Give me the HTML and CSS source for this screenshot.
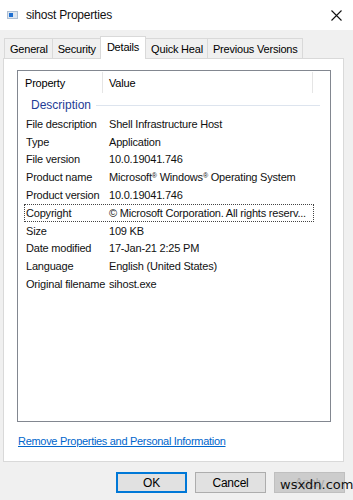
FILE: index.html
```html
<!DOCTYPE html>
<html>
<head>
<meta charset="utf-8">
<link rel="stylesheet" href="styles.css">
</head>
<body>
<div class="window">
  <div class="titlebar">
    <svg class="appicon" width="11" height="8" viewBox="0 0 11 8">
      <rect x="0" y="0" width="11" height="8" fill="#aebfd3"/>
      <rect x="1" y="1" width="9" height="6" fill="#dde6f0"/>
      <rect x="2" y="2" width="4" height="4" fill="#1f6fd1"/>
    </svg>
    <span class="title">sihost Properties</span>
    <svg class="close" width="11" height="11" viewBox="0 0 11 11">
      <path d="M0.5 0.5 L10.5 10.5 M10.5 0.5 L0.5 10.5" stroke="#111" stroke-width="1.1"/>
    </svg>
  </div>
  <div class="tabs">
    <div class="tab">General</div>
    <div class="tab">Security</div>
    <div class="tab active">Details</div>
    <div class="tab">Quick Heal</div>
    <div class="tab last">Previous Versions</div>
  </div>
  <div class="panel">
    <div class="list">
      <div class="header">
        <div class="hcell hprop">Property</div>
        <div class="hcell hval">Value</div>
        <div class="hcell hrest"></div>
      </div>
      <div class="group"><span class="gtext">Description</span><span class="gline"></span></div>
      <div class="row"><span class="k">File description</span><span class="v">Shell Infrastructure Host</span></div>
      <div class="row"><span class="k">Type</span><span class="v">Application</span></div>
      <div class="row"><span class="k">File version</span><span class="v">10.0.19041.746</span></div>
      <div class="row"><span class="k">Product name</span><span class="v">Microsoft<sup>®</sup> Windows<sup>®</sup> Operating System</span></div>
      <div class="row"><span class="k">Product version</span><span class="v">10.0.19041.746</span></div>
      <div class="row focus"><span class="k">Copyright</span><span class="v">© Microsoft Corporation. All rights reserv...</span></div>
      <div class="row"><span class="k">Size</span><span class="v">109 KB</span></div>
      <div class="row"><span class="k">Date modified</span><span class="v">17-Jan-21 2:25 PM</span></div>
      <div class="row"><span class="k">Language</span><span class="v">English (United States)</span></div>
      <div class="row"><span class="k">Original filename</span><span class="v">sihost.exe</span></div>
    </div>
    <a class="link" href="#">Remove Properties and Personal Information</a>
  </div>
  <div class="buttons">
    <div class="btn default">OK</div>
    <div class="btn">Cancel</div>
    <div class="btn disabled">Apply</div>
  </div>
  <div class="watermark">wsxdn.com</div>
</div>
</body>
</html>
```
FILE: styles.css
```css
* { box-sizing: border-box; }
html, body {
  margin: 0;
  padding: 0;
  width: 353px;
  height: 500px;
  overflow: hidden;
}
body {
  background: #f0f0f0;
  font-family: "Liberation Sans", Arial, sans-serif;
  font-size: 11px;
  letter-spacing: -0.2px;
  color: #000;
}
.window {
  position: relative;
  height: 500px;
}
.titlebar {
  height: 30px;
  background: #fff;
  display: flex;
  align-items: center;
  padding-left: 7px;
  padding-right: 11px;
}
.appicon { margin-right: 8px; }
.title {
  font-size: 12px;
  flex: 1;
  color: #111;
}
.tabs {
  display: flex;
  padding-left: 4px;
  margin-top: 8px;
  height: 20px;
  position: relative;
  z-index: 1;
}
.tab {
  height: 20px;
  border: 1px solid #d9d9d9;
  border-bottom: none;
  border-right: none;
  padding: 0 4px 0 5px;
  display: flex;
  align-items: center;
  background: #f0f0f0;
  color: #000;
}
.tab.last { border-right: 1px solid #d9d9d9; }
.tab.active {
  background: #fff;
  height: 23px;
  margin-top: -2px;
  margin-bottom: -1px;
  border-right: 1px solid #d9d9d9;
  padding: 0 6px 3px 6px;
}
.tab.active + .tab { border-left: none; }
.panel {
  margin: 0 9px 0 3px;
  height: 404px;
  background: #fff;
  border: 1px solid #d9d9d9;
  padding: 11px 12px 0 13px;
}
.list {
  height: 352px;
  border: 1px solid #828790;
  background: #fff;
}
.header {
  display: flex;
  height: 24px;
}
.hcell {
  display: flex;
  align-items: center;
  padding-left: 7px;
  border-right: 1px solid #e5e5e5;
  margin: 1px 0 2px;
}
.hprop { width: 85px; }
.hval { width: 210px; padding-left: 6px; }
.hrest { border-right: none; flex: 1; }
.group {
  display: flex;
  align-items: center;
  height: 20px;
  padding-left: 13px;
}
.gtext {
  color: #1e3c96;
  font-size: 12px;
  letter-spacing: 0;
  margin-right: 5px;
}
.gline {
  flex: 1;
  height: 1px;
  background: #dde4ee;
  margin-right: 10px;
}
.row {
  display: flex;
  align-items: center;
  height: 17.8px;
  margin-left: 6px;
  margin-right: 16px;
  padding-left: 1px;
  border: 1px dotted transparent;
}
.row.focus { border-color: #444; }
.k {
  width: 83px;
  flex-shrink: 0;
  white-space: nowrap;
  color: #111;
}
.v { white-space: nowrap; color: #111; }
.v sup {
  font-size: 7px;
  vertical-align: 3px;
  line-height: 0;
}
.link {
  display: block;
  margin-top: 13px;
  margin-left: 1px;
  color: #0066cc;
  text-decoration: underline;
  font-size: 11px;
  letter-spacing: -0.3px;
}
.buttons {
  display: flex;
  justify-content: flex-end;
  gap: 8px;
  padding-right: 8px;
  margin-top: 10px;
}
.btn {
  width: 71px;
  height: 21px;
  border: 1px solid #adadad;
  background: #e1e1e1;
  display: flex;
  align-items: center;
  justify-content: center;
  font-size: 12px;
}
.btn.default { border: 2px solid #0078d7; }
.btn.disabled {
  color: #a8a8a8;
  background: #cccccc;
  border-color: #bfbfbf;
}
.watermark {
  position: absolute;
  left: 280px;
  top: 477px;
  font-family: "DejaVu Sans", sans-serif;
  font-size: 13px;
  letter-spacing: 0;
  color: #111;
}
```
